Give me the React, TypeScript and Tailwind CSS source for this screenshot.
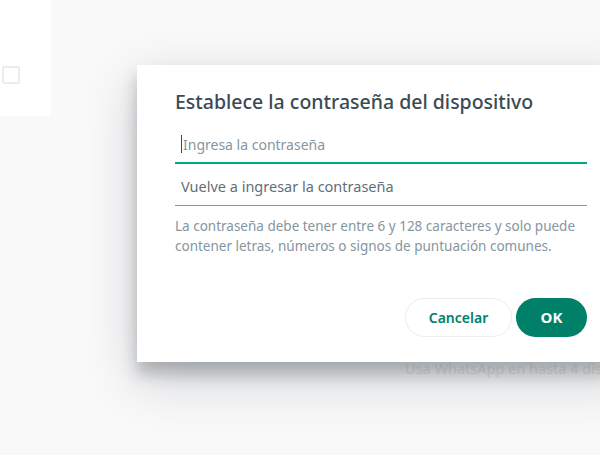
export default function App() {
  return (
    <div className="relative h-[455px] w-[600px] overflow-hidden bg-[#f9f9fa] font-['Noto_Sans',sans-serif]">
      {/* settings card peeking out behind the modal */}
      <div className="h-[116px] w-[51px] bg-white pt-[66px] pl-[2px]">
        <div className="h-[18px] w-[18px] rounded-[2px] border-2 border-[#e9edef]" />
      </div>

      <p className="absolute left-[405px] top-[358px] whitespace-nowrap text-[14.5px] text-[#e4e7e9]">
        Usa WhatsApp en hasta 4 dispositivos
      </p>

      {/* modal */}
      <div className="absolute left-[137px] top-[65px] flex h-[297px] w-[488px] flex-col bg-white pt-[24px] pl-[38px] pr-[38px] shadow-[0_17px_50px_0_rgba(11,20,26,0.19),0_12px_15px_0_rgba(11,20,26,0.24)]">
        <h2 className="text-[19.5px] font-medium leading-[26px] text-[#3b4a54]">
          Establece la contraseña del dispositivo
        </h2>

        <div className="mt-[11px] flex h-[38px] items-center border-b-2 border-[#00a884] pl-[6px]">
          <span className="mr-[1px] h-[18px] w-px bg-[#3b4a54]" />
          <span className="text-[14px] text-[#8696a0]">Ingresa la contraseña</span>
        </div>

        <div className="mt-[5px] flex h-[37px] items-center border-b border-[#8696a0] pl-[6px]">
          <span className="text-[14.5px] text-[#5f6f79]">Vuelve a ingresar la contraseña</span>
        </div>

        <p className="mt-[10px] text-[13.5px] leading-[20px] text-[#8696a0]">
          La contraseña debe tener entre 6 y 128 caracteres y solo puede
          <br />
          contener letras, números o signos de puntuación comunes.
        </p>

        <div className="mt-[42px] flex justify-end gap-[4px]">
          <button className="h-[39px] w-[107px] rounded-full border border-[#e9edef] text-[14px] font-semibold text-[#008069]">
            Cancelar
          </button>
          <button className="h-[39px] w-[71px] rounded-full bg-[#008069] text-[15px] font-bold text-white">
            OK
          </button>
        </div>
      </div>
    </div>
  );
}
